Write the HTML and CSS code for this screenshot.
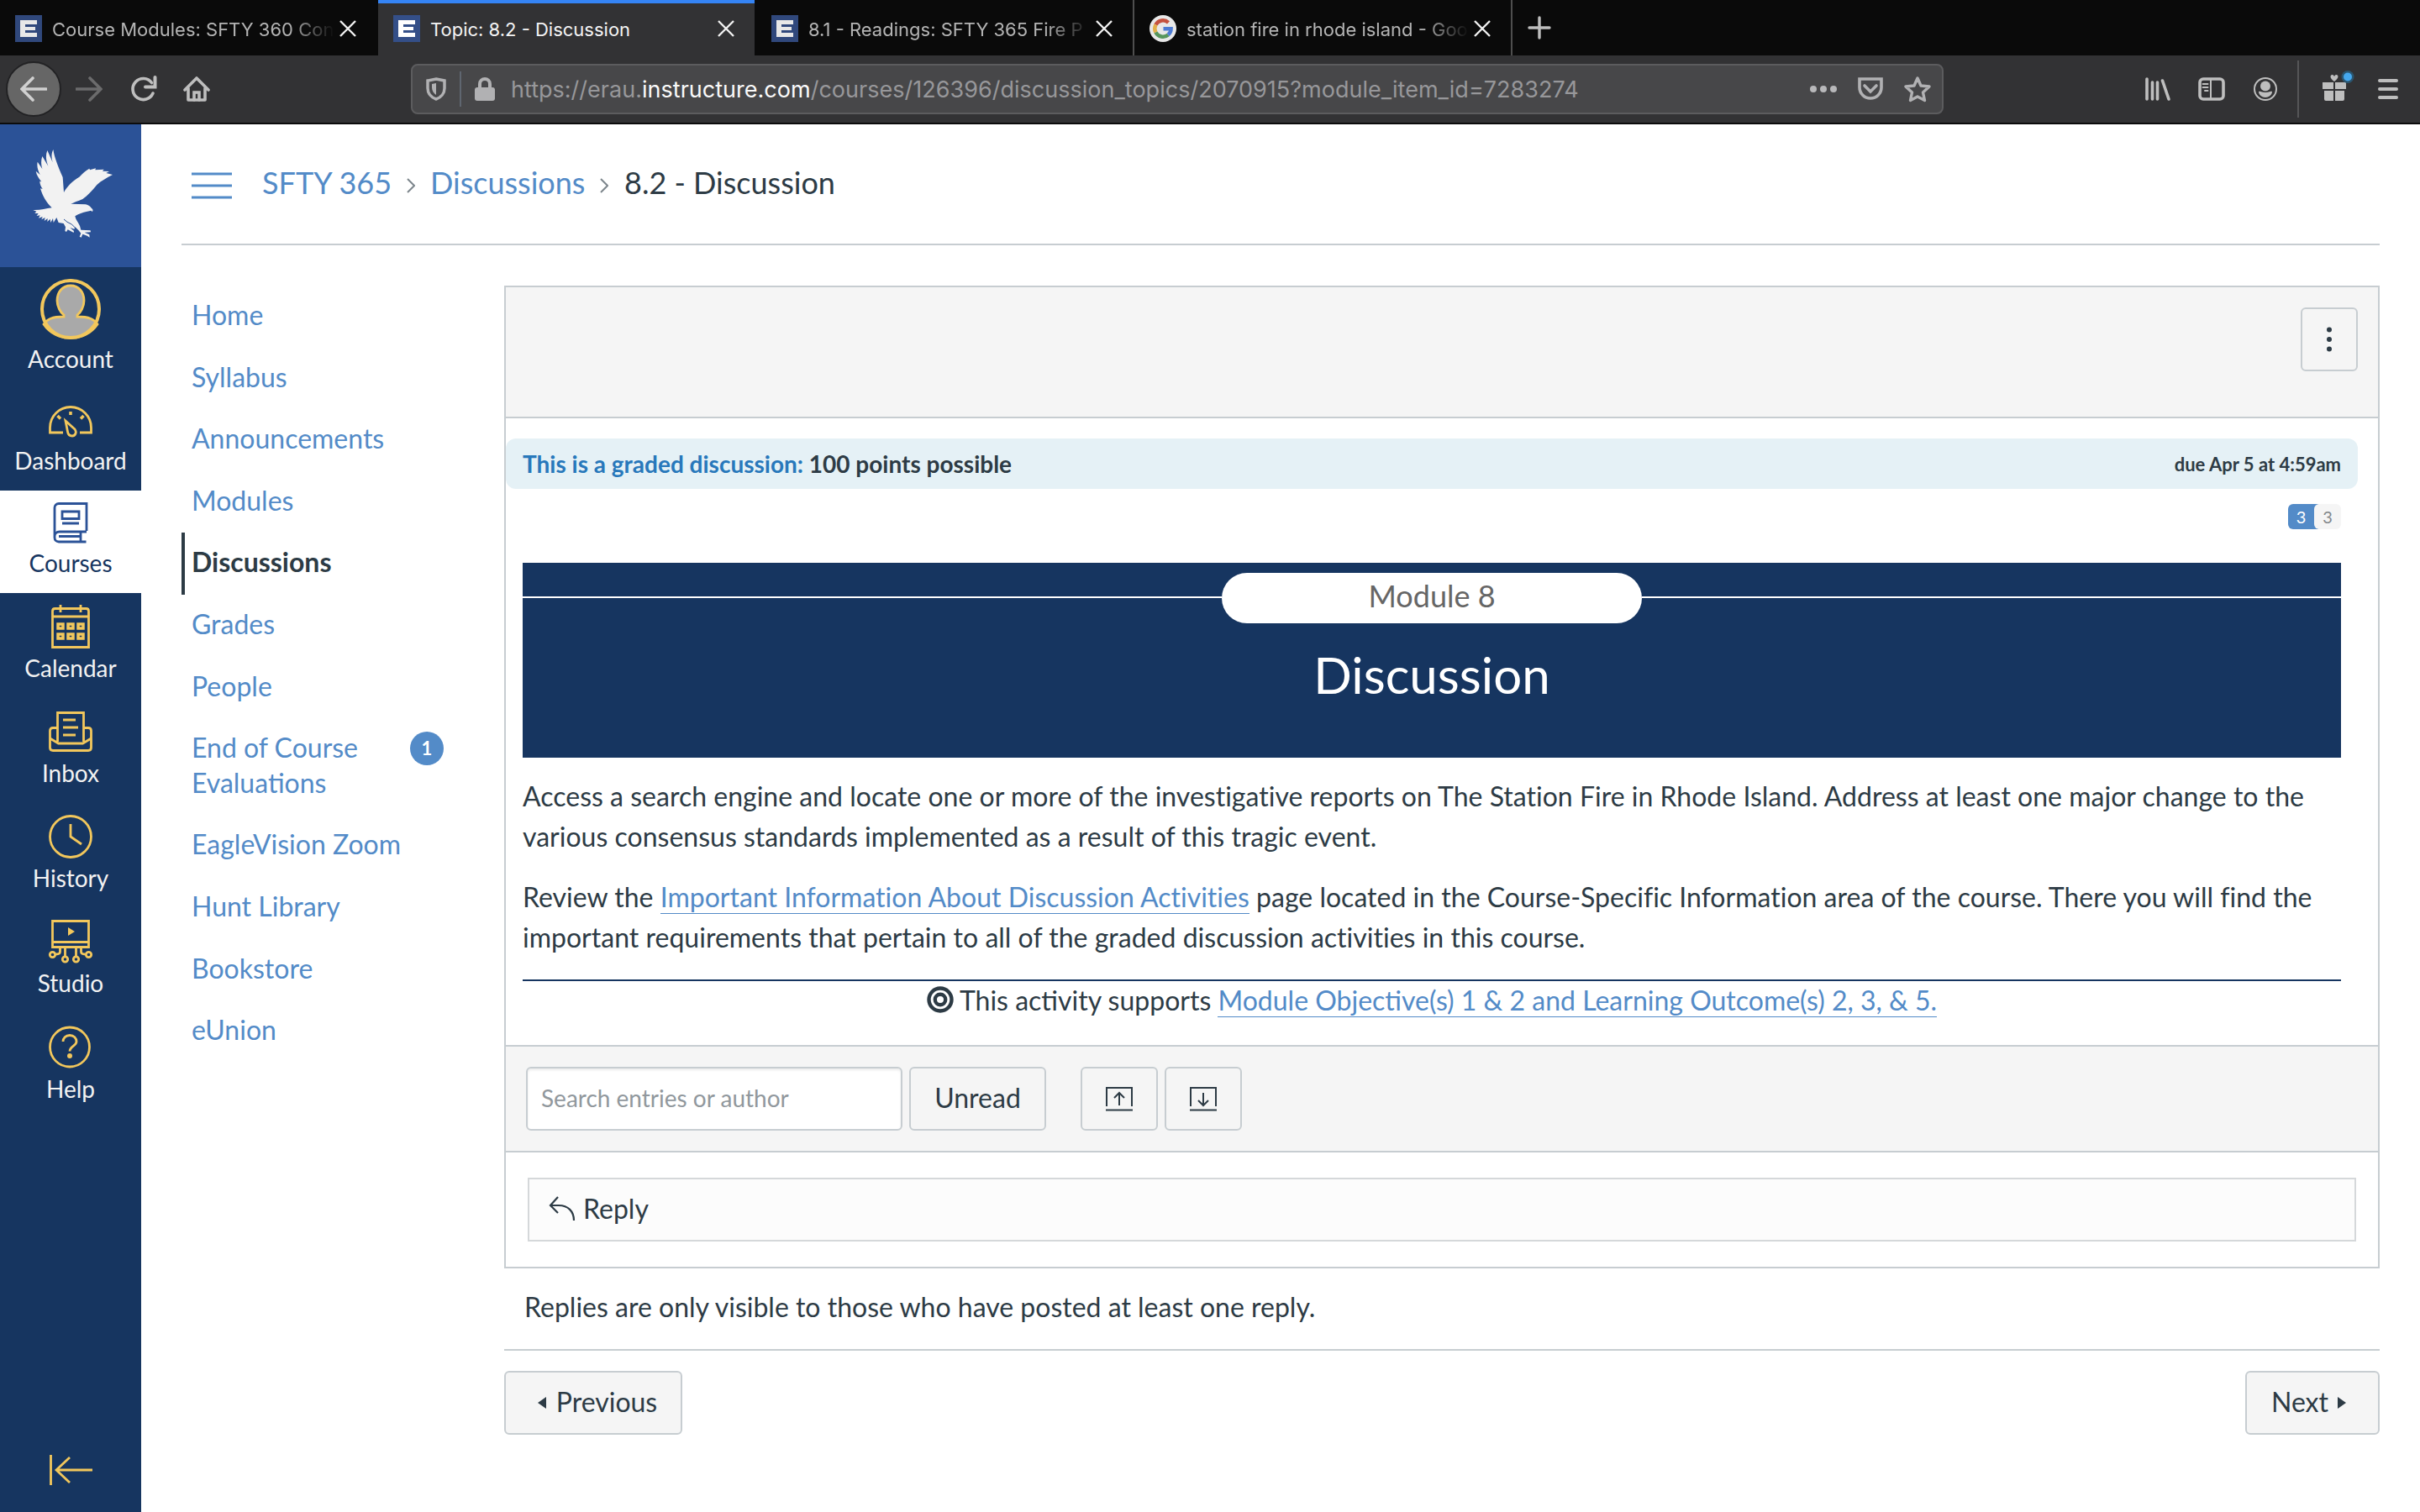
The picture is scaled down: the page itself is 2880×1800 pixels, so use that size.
FILE: index.html
```html
<!DOCTYPE html>
<html lang="en">
<head>
  <meta charset="UTF-8" />
  <meta name="viewport" content="width=device-width, initial-scale=1.0"/>
  <title>Topic: 8.2 - Discussion</title>
  <link rel="stylesheet" href="styles.css">
</head>
<body>
  <!-- Browser tabs -->
  <div class="tabs">
    <div class="tab">
      <svg class="favicon" viewBox="0 0 32 32"><rect width="32" height="32" fill="#30487c"/><path d="M6 6h20v5H12v3h12v4H12v3h14v5H6z" fill="#e8e8e8"/></svg>
      <span class="tab-title fade">Course Modules: SFTY 360 Con</span>
      <svg class="close" viewBox="0 0 20 20"><path d="M1 1l18 18M19 1L1 19"/></svg>
    </div>
    <div class="tab active">
      <svg class="favicon" viewBox="0 0 32 32"><rect width="32" height="32" fill="#344f88"/><path d="M6 6h20v5H12v3h12v4H12v3h14v5H6z" fill="#fff"/></svg>
      <span class="tab-title">Topic: 8.2 - Discussion</span>
      <svg class="close" viewBox="0 0 20 20"><path d="M1 1l18 18M19 1L1 19"/></svg>
    </div>
    <div class="tab line">
      <svg class="favicon" viewBox="0 0 32 32"><rect width="32" height="32" fill="#30487c"/><path d="M6 6h20v5H12v3h12v4H12v3h14v5H6z" fill="#e8e8e8"/></svg>
      <span class="tab-title fade">8.1 - Readings: SFTY 365 Fire P</span>
      <svg class="close" viewBox="0 0 20 20"><path d="M1 1l18 18M19 1L1 19"/></svg>
    </div>
    <div class="tab line">
      <svg class="favicon" viewBox="0 0 32 32">
        <circle cx="16" cy="16" r="16" fill="#e8e8e8"/>
        <g fill="none" stroke-width="4.5">
          <path d="M22.5 8.8A9.7 9.7 0 0 0 7.4 11.5" stroke="#c5523f"/>
          <path d="M7.4 11.5a9.7 9.7 0 0 0 0 9" stroke="#e3b04a"/>
          <path d="M7.4 20.5a9.7 9.7 0 0 0 14.8 3" stroke="#57965c"/>
          <path d="M22.2 23.5a9.5 9.5 0 0 0 3.4-7.2H16.5" stroke="#4c7bd4"/>
        </g>
      </svg>
      <span class="tab-title fade">station fire in rhode island - Goo</span>
      <svg class="close" viewBox="0 0 20 20"><path d="M1 1l18 18M19 1L1 19"/></svg>
    </div>
    <svg class="new-tab" viewBox="0 0 28 28"><path d="M14 2v24M2 14h24"/></svg>
  </div>

  <!-- Browser toolbar -->
  <div class="toolbar">
    <div class="back"><svg viewBox="0 0 32 32"><path d="M31 16H3M15 3L2 16l13 13"/></svg></div>
    <svg class="tool forward" viewBox="0 0 32 32"><path d="M1 16h28M17 3l13 13-13 13"/></svg>
    <svg class="tool reload" viewBox="0 0 32 32"><path d="M27 21a12.500 12.500 0 1 1-1.500-12.500"/><path d="M29.500 2v11.500H18" stroke-width="4"/></svg>
    <svg class="tool home" viewBox="0 0 32 32"><path d="M2 17L16 3l14 14M6 15v14h20V15" stroke-linejoin="round"/><path d="M13 29v-9h6v9" /></svg>

    <div class="url-bar">
      <svg class="shield" viewBox="0 0 24 28"><path d="M12 2L22 4v9c0 6-4 11-10 13C6 24 2 19 2 13V4z" fill="none" stroke="#b1b1b3" stroke-width="3.500"/><path d="M12 7v14c-3-2-5-5-5-9V8z" fill="#b1b1b3"/></svg>
      <div class="url-split"></div>
      <svg class="lock" viewBox="0 0 24 28"><rect y="12" width="24" height="16" rx="3" fill="#b1b1b3"/><path d="M6 13V8a6 6 0 0 1 12 0v5" fill="none" stroke="#b1b1b3" stroke-width="4"/></svg>
      <span class="url">https://erau.<b>instructure.com</b>/courses/126396/discussion_topics/2070915?module_item_id=7283274</span>
      <svg class="page-actions" viewBox="0 0 32 8"><circle cx="4" cy="4" r="4"/><circle cx="16" cy="4" r="4"/><circle cx="28" cy="4" r="4"/></svg>
      <svg class="pocket" viewBox="0 0 32 28"><path d="M3 2h26v10a13 13 0 0 1-26 0z"/><path d="M9 10l7 7 7-7"/></svg>
      <svg class="star" viewBox="0 0 32 32"><path d="M16 3l4 9 10 1-7.500 7 2 9.500L16 25l-8.500 4.500 2-9.500L2 13l10-1z"/></svg>
    </div>

    <svg class="library" viewBox="0 0 32 28"><path d="M2 2v24M8.500 6v20M14.500 6v20M20.500 4L28 26"/></svg>
    <svg class="reader" viewBox="0 0 32 28"><rect x="2" y="2" width="28" height="24" rx="4"/><path d="M15 2v24" stroke-width="2"/><path d="M5.500 8h6M5.500 12h6M8 16h3.500" stroke-width="2"/></svg>
    <svg class="profile" viewBox="0 0 28 28"><circle cx="14" cy="14" r="13" fill="none" stroke="#bebebe" stroke-width="2"/><circle cx="14" cy="10.500" r="6" fill="#bebebe"/><path d="M6 17c2-1 4 1 8 1s6-2 8-1c0 4-4 7-8 7s-8-3-8-7z" fill="#bebebe"/></svg>
    <div class="tool-split"></div>
    <svg class="gift" viewBox="0 0 38 38"><path d="M0 15h13v8H0zM15 15h13v8H15zM2 25h11v12H4a2 2 0 0 1-2-2zM15 25h11v10a2 2 0 0 1-2 2h-9z" fill="#bebebe"/><path d="M14 14c-6-4-5-8-2.500-8 1.800 0 2.500 2 2.500 2s.7-2 2.500-2c2.500 0 3.500 4-2.500 8z" fill="#bebebe"/><circle cx="30" cy="8.500" r="7.500" fill="#2b5670"/><circle cx="30" cy="8.500" r="5" fill="#45a8ee"/></svg>
    <svg class="menu" viewBox="0 0 24 24"><path d="M2 2h20M2 12h20M2 22h20"/></svg>
  </div>

  <div class="page">
    <!-- Global navigation -->
    <nav class="global-nav">
      <div class="logo">
        <svg viewBox="0 0 348 390">
          <path fill="#f2f2f2" d="M95 247C75 228 62 205 54 178L62 180C56 170 52 163 52 152L58 154C49 142 41 132 38 116L53 129C45 113 41 100 44 83L61 108C56 93 56 78 61 63L82 98C74 78 72 60 79 42L98 85C93 68 93 53 100 39C104 66 117 100 134 138L138 192C150 170 170 150 193 137C205 124 216 114 229 107L231 112L252 106L250 112L281 110L276 116L300 117L289 123L312 129C290 141 272 150 256 165C238 187 222 205 205 216C188 223 174 228 163 233L216 235C226 237 232 242 237 249C242 252 243 258 239 261L235 257C215 262 196 264 178 277C180 289 189 299 195 312L199 326L233 328L234 334L212 335L229 343L230 353L221 347L205 341L200 353L194 350L199 338L190 327L178 316L175 323L160 318L174 330L173 336L152 325L147 333L142 330L144 316L137 303L119 300L112 282L101 300L99 285L91 300L89 287L79 297L80 285L68 294L71 282L58 289L62 279L48 284L53 274L41 276L47 267L34 267L40 260L28 255C54 256 73 250 95 247Z"/>
          <path d="M138 288L150 298L166 306L185 325" fill="none" stroke="#2b5297" stroke-width="3"/>
        </svg>
      </div>
      <a class="nav-item account">
        <svg class="avatar" viewBox="0 0 72 72">
          <circle cx="36" cy="36" r="34" fill="#163560"/>
          <path d="M36 8c10 0 16 8 16 18 0 7-4 14-8 17v2c14 0 20 3 24 9A36 36 0 0 1 36 70 36 36 0 0 1 4 54c4-6 10-9 24-9v-2c-4-3-8-10-8-17C20 16 26 8 36 8z" fill="#a9a9a9"/>
          <circle cx="36" cy="36" r="34" fill="none" stroke="#f2c75c" stroke-width="4"/>
        </svg>
        <span>Account</span>
      </a>
      <a class="nav-item dashboard">
        <svg viewBox="0 0 52 52"><path d="M17 42H1.500v-6a24.500 24.500 0 0 1 49 0v6H37"/><path d="M26 17v4M10.500 22l3.500 3.500M41.500 22L38 25.500" stroke-width="3.500"/><path d="M20 28l11 10c3 4 0 8-3 8s-5-2-5.500-5z"/></svg>
        <span>Dashboard</span>
      </a>
      <a class="nav-item current">
        <svg viewBox="0 0 52 52"><path d="M45 37V4.500H12c-3 0-5 2-5 5V45c0 3 2 5 5 5h32.500M45 38H13c-4 0-6 2.500-6 5.500M12 43.500h27M38 38v12"/><path d="M16 14h20v8.500H16zM16 28h20"/></svg>
        <span>Courses</span>
      </a>
      <a class="nav-item">
        <svg viewBox="0 0 52 52"><path d="M4.500 50.500v-43c0-2 1-3 3-3h37c2 0 3 1 3 3v43zM4 14h44M14 0v9M38 0v9"/><path d="M11 23h6v5h-6zM23 23h6v5h-6zM35 23h6v5h-6zM11 35h6v5h-6zM23 35h6v5h-6zM35 35h6v5h-6z" stroke-width="3.500"/></svg>
        <span>Calendar</span>
      </a>
      <a class="nav-item">
        <svg viewBox="0 0 52 52"><path d="M10.500 38V3.500h31V38M10 21.500H5c-2.500 0-3.500 1.500-3.500 3.500v20c0 2.500 1.500 3.500 3.500 3.500h42c2.500 0 3.500-1.500 3.500-3.500V25c0-2-1-3.500-3.500-3.500h-5"/><path d="M1.500 34l10 6h29l10-6M17 12h15M17 21h18M17 30h15"/></svg>
        <span>Inbox</span>
      </a>
      <a class="nav-item">
        <svg viewBox="0 0 52 52"><circle cx="26" cy="26" r="24.500"/><path d="M26 11v15l13 9"/></svg>
        <span>History</span>
      </a>
      <a class="nav-item">
        <svg viewBox="0 0 52 52"><path d="M4.500 1.500h43v31h-43zM4.500 26.500h43"/><path d="M23 9l8 5-8 5z" fill="#f2c75c" stroke="none"/><path d="M13.500 33v5c0 2-1 3-5 3M19.500 33v11M32.500 33v11M38.500 33v5c0 2 1 3 5 3"/><circle cx="4.500" cy="41.500" r="3.200"/><circle cx="19.500" cy="47" r="3.200"/><circle cx="32.500" cy="47" r="3.200"/><circle cx="47.500" cy="41.500" r="3.200"/></svg>
        <span>Studio</span>
      </a>
      <a class="nav-item help">
        <svg viewBox="0 0 52 52"><circle cx="25" cy="25.500" r="23.500"/><path d="M17 19c0-4 3-7.500 8-7.500s8 3.500 8 7.500c0 5-8 6-8 11.500"/><circle cx="25" cy="36" r="3" fill="#f2c75c" stroke="none"/></svg>
        <span>Help</span>
      </a>
      <svg class="collapse" viewBox="0 0 52 38"><path d="M1.500 1v36M51 19H8M24 4L8 19l16 15"/></svg>
    </nav>

    <main class="main">
      <header class="crumbs">
        <svg class="burger" viewBox="0 0 48 32"><path d="M0 2h48M0 16h48M0 30h48"/></svg>
        <a class="crumb c1">SFTY 365</a>
        <svg class="chev" viewBox="0 0 10 18"><path d="M1 1l8 8-8 8"/></svg>
        <a class="crumb c2">Discussions</a>
        <svg class="chev" viewBox="0 0 10 18"><path d="M1 1l8 8-8 8"/></svg>
        <span class="crumb here">8.2 - Discussion</span>
      </header>

      <div class="columns">
        <ul class="course-nav">
          <li>Home</li>
          <li>Syllabus</li>
          <li>Announcements</li>
          <li>Modules</li>
          <li class="selected">Discussions</li>
          <li>Grades</li>
          <li>People</li>
          <li class="with-badge"><span>End of Course Evaluations</span><b class="badge">1</b></li>
          <li>EagleVision Zoom</li>
          <li>Hunt Library</li>
          <li>Bookstore</li>
          <li>eUnion</li>
        </ul>

        <div class="content">
          <section class="topic">
            <div class="topic-head">
              <button class="btn kebab"><svg viewBox="0 0 8 30"><circle cx="4" cy="3.500" r="3"/><circle cx="4" cy="15" r="3"/><circle cx="4" cy="26.500" r="3"/></svg></button>
            </div>
            <div class="graded">
              <div class="points"><em>This is a graded discussion:</em> 100 points possible</div>
              <div class="due">due Apr 5 at 4:59am</div>
            </div>
            <div class="topic-body">
              <div class="counts"><span class="unread">3</span><span class="total">3</span></div>
              <div class="banner">
                <div class="banner-row"><i></i><span class="module">Module 8</span><i></i></div>
                <div class="banner-title">Discussion</div>
              </div>
              <p>Access a search engine and locate one or more of the investigative reports on The Station Fire in Rhode Island. Address at least one major change to the<br>various consensus standards implemented as a result of this tragic event.</p>
              <p>Review the <a class="link">Important Information About Discussion Activities</a> page located in the Course-Specific Information area of the course. There you will find the<br>important requirements that pertain to all of the graded discussion activities in this course.</p>
              <div class="supports">
                <svg viewBox="0 0 32 32"><circle cx="16" cy="16" r="13.500"/><circle cx="16" cy="16" r="6.200"/></svg>
                <span>This activity supports <a class="link">Module Objective(s) 1 &amp; 2 and Learning Outcome(s) 2, 3, &amp; 5.</a></span>
              </div>
            </div>
            <div class="filters">
              <input class="search" type="text" placeholder="Search entries or author" />
              <button class="btn unread-btn">Unread</button>
              <button class="btn icon-btn first"><svg viewBox="0 0 32 30"><path d="M1 24V2h30v22M0 28.500h32M16 23V9M10 14l6-6 6 6"/></svg></button>
              <button class="btn icon-btn"><svg viewBox="0 0 32 30"><path d="M1 24V2h30v22M0 28.500h32M16 8v14M10 17l6 6 6-6"/></svg></button>
            </div>
            <div class="reply-wrap">
              <div class="reply">
                <svg viewBox="0 0 32 30"><path d="M11 1L2 11l9 9M2 11h10c11 0 18 7 18 18"/></svg>
                <span>Reply</span>
              </div>
            </div>
          </section>
          <p class="note">Replies are only visible to those who have posted at least one reply.</p>
          <div class="pager">
            <button class="btn prev"><svg viewBox="0 0 10 14"><path d="M10 0v14L0 7z"/></svg>Previous</button>
            <button class="btn next">Next<svg viewBox="0 0 10 14"><path d="M0 0v14l10-7z"/></svg></button>
          </div>
        </div>
      </div>
    </main>
  </div>
</body>
</html>
```
FILE: styles.css
```css
* {
  box-sizing: border-box;
}

body {
  margin: 0;
  width: 2880px;
  height: 1800px;
  overflow: hidden;
  font-family: Lato, sans-serif;
  font-size: 32px;
  color: #2d3b45;
  background: #fff;
}

svg {
  display: block;
  flex: none;
}

/* browser tabs */
.tabs {
  display: flex;
  height: 66px;
  background: #0a0a0a;
  font-family: Inter, sans-serif;
}

.tab {
  display: flex;
  align-items: center;
  width: 450px;
  height: 66px;
  padding: 2px 26px 0 18px;
  color: #b4b4b4;
}

.tab.active {
  width: 448px;
  margin-right: 2px;
  background: #323234;
  border-top: 4px solid #3584f5;
  padding-top: 0;
  padding-bottom: 2px;
  padding-right: 24px;
  color: #f4f4f4;
}

.tab.line {
  border-right: 2px solid #4e4e4e;
  padding-right: 24px;
}

.favicon {
  width: 32px;
  height: 32px;
}

.tab-title {
  flex: 1;
  width: 0;
  margin-left: 12px;
  margin-right: 6px;
  padding-top: 2px;
  font-size: 22px;
  white-space: nowrap;
}

.tab-title.fade {
  -webkit-mask-image: linear-gradient(to right, #000 84%, transparent);
  mask-image: linear-gradient(to right, #000 84%, transparent);
}

.close {
  width: 20px;
  height: 20px;
  fill: none;
  stroke: #f2f2f2;
  stroke-width: 2.4;
}

.new-tab {
  width: 28px;
  height: 28px;
  margin: 19px 0 0 18px;
  stroke: #bebebe;
  stroke-width: 3.4;
  stroke-linecap: round;
}

/* browser toolbar */
.toolbar {
  display: flex;
  align-items: center;
  height: 82px;
  background: #323234;
  border-bottom: 2px solid #0c0c0c;
  fill: none;
  stroke-linecap: round;
}

.back {
  display: flex;
  align-items: center;
  justify-content: center;
  width: 66px;
  height: 66px;
  margin-left: 7px;
  border: 2px solid #222224;
  border-radius: 50%;
  background: #666;
}

.back svg {
  width: 32px;
  height: 32px;
  stroke: #d0d0d0;
  stroke-width: 3.6;
}

.tool {
  width: 32px;
  height: 32px;
  stroke: #bebebe;
  stroke-width: 3.6;
}

.forward {
  margin-left: 17px;
  stroke: #6b6b6c;
}

.reload {
  margin-left: 33px;
}

.home {
  margin-left: 31px;
}

.url-bar {
  display: flex;
  align-items: center;
  width: 1824px;
  height: 60px;
  margin-left: 239px;
  padding-left: 16px;
  border: 2px solid #5c5c5e;
  border-radius: 8px;
  background: #474749;
}

.shield,
.lock {
  width: 24px;
  height: 28px;
}

.url-split {
  width: 2px;
  height: 42px;
  margin: 0 16px;
  background: #5f6670;
}

.url {
  width: 1546px;
  margin-left: 19px;
  padding-top: 1px;
  font-family: Inter, sans-serif;
  font-size: 27px;
  letter-spacing: 0.015px;
  color: #97979a;
  white-space: nowrap;
}

.url b {
  font-weight: 400;
  color: #fafafa;
}

.page-actions {
  width: 32px;
  height: 8px;
  fill: #b8b8ba;
}

.pocket {
  width: 32px;
  height: 28px;
  margin-left: 24px;
  stroke: #b1b1b3;
  stroke-width: 3.6;
}

.star {
  width: 32px;
  height: 32px;
  margin-left: 24px;
  stroke: #b1b1b3;
  stroke-width: 3.4;
  stroke-linejoin: round;
}

.library {
  width: 32px;
  height: 28px;
  margin-left: 240px;
  stroke: #bebebe;
  stroke-width: 3.6;
}

.reader {
  width: 32px;
  height: 28px;
  margin-left: 31px;
  stroke: #bebebe;
  stroke-width: 3.6;
}

.profile {
  width: 28px;
  height: 28px;
  margin-left: 34px;
}

.tool-split {
  width: 2px;
  height: 68px;
  margin-left: 24px;
  background: #555557;
}

.gift {
  width: 38px;
  height: 38px;
  margin: -9px 0 0 28px;
}

.menu {
  width: 24px;
  height: 24px;
  margin-left: 28px;
  stroke: #bebebe;
  stroke-width: 4;
}

/* page */
.page {
  display: flex;
  height: 1652px;
}

.global-nav {
  display: flex;
  flex-direction: column;
  width: 168px;
  background: #163560;
}

.logo {
  height: 170px;
  padding: 17px 0 0 30px;
  background: #2b5297;
}

.logo svg {
  width: 116px;
  height: 130px;
}

.nav-item {
  display: flex;
  flex-direction: column;
  align-items: center;
  justify-content: flex-end;
  height: 125px;
  padding-bottom: 19px;
  font-size: 28px;
  line-height: 34px;
  color: #f2f2f2;
}

.nav-item svg {
  width: 52px;
  height: 52px;
  margin-bottom: 6px;
  fill: none;
  stroke: #f2c75c;
  stroke-width: 2.8;
  overflow: visible;
}

.nav-item .avatar {
  width: 72px;
  height: 72px;
}

.account {
  height: 145px;
}

.dashboard {
  height: 121px;
}

.help {
  height: 126px;
}

.current {
  height: 122px;
  background: #fff;
  color: #163560;
}

.current svg {
  stroke: #2b5297;
}

.collapse {
  width: 52px;
  height: 38px;
  margin: auto 0 31px 59px;
  fill: none;
  stroke: #f2c75c;
  stroke-width: 2.8;
}

.main {
  width: 2616px;
  margin-left: 48px;
}

.crumbs {
  display: flex;
  align-items: center;
  height: 144px;
  padding: 0 0 1px 12px;
  border-bottom: 2px solid #c7cdd1;
  font-size: 36px;
  white-space: nowrap;
}

.burger {
  width: 48px;
  height: 32px;
  margin-top: 5px;
  stroke: #538bc8;
  stroke-width: 3;
}

.crumb {
  padding-bottom: 4px;
  color: #538bc8;
}

.c1 {
  width: 152px;
  margin-left: 36px;
}

.c2 {
  width: 182px;
  margin-left: 18px;
}

.chev {
  width: 10px;
  height: 18px;
  margin: 5px 0 0 20px;
  fill: none;
  stroke: #7d868c;
  stroke-width: 2;
}

.here {
  margin-left: 19px;
  color: #2d3b45;
}

.columns {
  display: flex;
}

.course-nav {
  width: 384px;
  margin: 0;
  padding: 48px 0 0;
  list-style: none;
  line-height: 41.6px;
  color: #538bc8;
}

.course-nav li {
  padding: 14px 0 18px 12px;
}

.course-nav .selected {
  padding-left: 8px;
  border-left: 4px solid #2d3b45;
  font-weight: bold;
  color: #2d3b45;
}

.with-badge {
  display: flex;
  align-items: flex-start;
}

.with-badge span {
  width: 260px;
}

.badge {
  width: 40px;
  height: 40px;
  margin-top: 2px;
  border-radius: 50%;
  background: #538bc8;
  color: #fff;
  font-size: 22px;
  line-height: 39px;
  text-align: center;
}

.content {
  width: 2232px;
  padding-top: 48px;
}

.topic {
  height: 1170px;
  border: 2px solid #c7cdd1;
}

.topic-head {
  display: flex;
  justify-content: flex-end;
  height: 156px;
  padding: 24px;
  background: #f5f5f5;
  border-bottom: 2px solid #c7cdd1;
}

.btn {
  display: flex;
  align-items: center;
  justify-content: center;
  height: 76px;
  padding: 0;
  border: 2px solid #c7cdd1;
  border-radius: 6px;
  background: #f5f5f5;
  font-family: Lato, sans-serif;
  font-size: 32px;
  color: #2d3b45;
}

.kebab {
  width: 68px;
}

.kebab svg {
  width: 8px;
  height: 30px;
  fill: #2d3b45;
}

.graded {
  display: flex;
  justify-content: space-between;
  align-items: center;
  height: 60px;
  margin: 24px 24px 0 0;
  padding: 0 20px;
  border-radius: 12px;
  background: #e5f1f6;
  font-weight: bold;
}

.points {
  font-size: 28px;
}

.points em {
  font-style: normal;
  color: #2878bb;
}

.due {
  font-size: 22px;
}

.topic-body {
  height: 662px;
  padding: 18px 44px 0 20px;
}

.counts {
  display: flex;
  justify-content: flex-end;
  height: 30px;
  font-size: 20px;
  line-height: 30px;
  text-align: center;
}

.unread {
  width: 36px;
  padding-right: 5px;
  border-radius: 6px 0 0 6px;
  background: #538bc8;
  color: #fff;
}

.total {
  width: 32px;
  margin-left: -5px;
  border-radius: 6px;
  background: #f5f5f5;
  color: #82878b;
}

.banner {
  height: 232px;
  margin: 40px 0 22px;
  padding-top: 12px;
  background: #163560;
  color: #fff;
  text-align: center;
}

.banner-row {
  display: flex;
}

.banner-row i {
  flex: 1;
  height: 2px;
  margin-top: 28px;
  background: #fff;
}

.module {
  width: 500px;
  height: 60px;
  border-radius: 30px;
  background: #fff;
  color: #666;
  font-size: 36px;
  line-height: 55px;
}

.banner-title {
  margin-top: 23px;
  font-size: 60px;
  line-height: 76px;
}

.topic-body p {
  margin: 0 0 24px;
  line-height: 48px;
  letter-spacing: 0.01px;
  white-space: nowrap;
  font-variant-ligatures: common-ligatures;
}

.link {
  color: #538bc8;
  border-bottom: 1px solid #538bc8;
}

.supports {
  display: flex;
  justify-content: center;
  gap: 7px;
  margin-top: 26px;
  border-top: 2px solid #163560;
  line-height: 46px;
}

.supports svg {
  width: 32px;
  height: 32px;
  margin-top: 6px;
  fill: none;
  stroke: #2d3b45;
  stroke-width: 4.4;
}

.filters {
  display: flex;
  height: 128px;
  padding: 24px;
  background: #f5f5f5;
  border-top: 2px solid #c7cdd1;
  border-bottom: 2px solid #c7cdd1;
}

.search {
  width: 448px;
  height: 76px;
  padding: 0 16px 3px;
  border: 2px solid #c7cdd1;
  border-radius: 6px;
  box-shadow: inset 0 2px 3px rgba(0,0,0,0.08);
  font-family: Lato, sans-serif;
  font-size: 28px;
}

.search::placeholder {
  color: #91989d;
}

.unread-btn {
  width: 163px;
  margin-left: 8px;
  padding-bottom: 4px;
}

.icon-btn {
  width: 92px;
  margin-left: 8px;
}

.icon-btn.first {
  margin-left: 41px;
}

.icon-btn svg {
  width: 32px;
  height: 30px;
  fill: none;
  stroke: #2d3b45;
  stroke-width: 2;
}

.reply-wrap {
  padding: 30px 26px 0;
}

.reply {
  display: flex;
  align-items: center;
  height: 76px;
  padding: 0 0 3px 23px;
  border: 2px solid #d5d8da;
  background: #fcfcfc;
}

.reply svg {
  width: 32px;
  height: 30px;
  margin-right: 9px;
  fill: none;
  stroke: #2d3b45;
  stroke-width: 2.2;
}

.note {
  height: 98px;
  margin: 0;
  padding: 22px 24px 0;
  border-bottom: 2px solid #c7cdd1;
  line-height: 48px;
}

.pager {
  display: flex;
  justify-content: space-between;
  padding-top: 24px;
}

.pager .btn {
  padding-bottom: 4px;
}

.pager svg {
  width: 10px;
  height: 14px;
  fill: #2d3b45;
}

.prev {
  width: 212px;
}

.prev svg {
  margin: 4px 12px 0 10px;
}

.next {
  width: 160px;
}

.next svg {
  margin: 4px 9px 0 11px;
}
```
